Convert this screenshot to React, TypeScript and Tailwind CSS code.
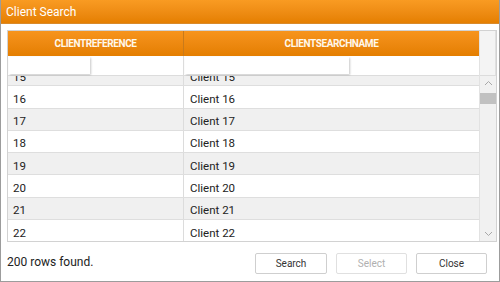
import * as React from "react";

const rows = [15, 16, 17, 18, 19, 20, 21, 22];

function Chevron({ up }: { up?: boolean }) {
    return (
        <svg width="9" height="6" viewBox="0 0 9 6" className="text-[#a8a8a8]">
            <path
                d={up ? "M1 5 L4.5 1.5 L8 5" : "M1 1 L4.5 4.5 L8 1"}
                fill="none"
                stroke="currentColor"
                strokeWidth="1"
            />
        </svg>
    );
}

export default function App() {
    return (
        <main className="w-[500px] h-[282px] bg-white flex flex-col border-x border-b border-[#9c9c9c] font-['Roboto','Liberation_Sans',sans-serif] overflow-hidden">
            {/* title */}
            <div className="h-[24px] shrink-0 flex items-center px-[5px] bg-gradient-to-b from-[#f99b22] to-[#e57f00] border-b border-[#d98a2a]">
                <span className="text-white text-[12px] leading-none">Client Search</span>
            </div>

            <div className="pl-[6px] pt-[6px]">
                <div className="w-[490px] h-[212px] border border-[#d2d2d2] flex">
                    <div className="flex-1 flex flex-col min-w-0">
                        {/* header */}
                        <div className="h-[25px] shrink-0 flex bg-gradient-to-b from-[#f7941c] to-[#e47e00] text-[#fff8ec] text-[10px] font-bold tracking-[-0.4px]">
                            <div className="w-[176px] border-r border-[#c97a1a] flex items-center justify-center">
                                CLIENTREFERENCE
                            </div>
                            <div className="flex-1 flex items-center justify-center">CLIENTSEARCHNAME</div>
                        </div>
                        {/* filters */}
                        <div className="h-[20px] shrink-0 flex border-b border-[#dcdcdc] bg-white">
                            <div className="w-[176px] border-r border-[#dcdcdc] pl-[1px] pt-[1px]">
                                <div className="w-[81px] h-[17px] bg-white shadow-[1px_1px_2px_rgba(0,0,0,0.22)]" />
                            </div>
                            <div className="flex-1 pl-[1px] pt-[1px]">
                                <div className="w-[164px] h-[17px] bg-white shadow-[1px_1px_2px_rgba(0,0,0,0.22)]" />
                            </div>
                        </div>
                        {/* rows */}
                        <div className="flex-1 overflow-hidden">
                            <div className="-mt-[12px]">
                                {rows.map((n) => (
                                    <div
                                        key={n}
                                        className={`h-[22.3px] flex border-b border-[#dedede] text-[11.5px] text-[#222] ${
                                            n % 2 === 1 ? "bg-[#f0f0f0]" : "bg-white"
                                        }`}
                                    >
                                        <div className="w-[176px] h-full flex items-center pt-[5px] pl-[5px] border-r border-[#dcdcdc]">{n}</div>
                                        <div className="flex-1 flex items-center pt-[5px] pl-[6px]">Client {n}</div>
                                    </div>
                                ))}
                            </div>
                        </div>
                    </div>
                    {/* scrollbar */}
                    <div className="w-[17px] shrink-0 flex flex-col border-l border-[#e2e2e2]">
                        <div className="h-[45px] shrink-0 bg-[#f4f4f4] border-b border-[#dcdcdc] border-r border-r-[#e0e0e0]" />
                        <div className="flex-1 bg-[#f1f1f1] flex flex-col items-center">
                            <div className="h-[14px] flex items-center">
                                <Chevron up />
                            </div>
                            <div className="w-[16px] h-[11px] bg-[#c1c1c1] mt-[3px]" />
                            <div className="flex-1" />
                            <div className="h-[14px] flex items-center">
                                <Chevron />
                            </div>
                        </div>
                    </div>
                </div>
            </div>

            {/* footer */}
            <div className="flex-1 flex items-center justify-between pl-[6px] pr-[12px]">
                <span className="text-[12px] text-[#222]">200 rows found.</span>
                <div className="flex gap-[9px] pt-[3px]">
                    <button className="w-[72px] h-[21px] bg-white border border-[#cfcfcf] rounded-[2px] text-[10px] text-[#333]">
                        Search
                    </button>
                    <button disabled className="w-[71px] h-[21px] bg-white border border-[#e0e0e0] rounded-[2px] text-[10px] text-[#b0b0b0]">
                        Select
                    </button>
                    <button className="w-[71px] h-[21px] bg-white border border-[#cfcfcf] rounded-[2px] text-[10px] text-[#333]">
                        Close
                    </button>
                </div>
            </div>
        </main>
    );
}
